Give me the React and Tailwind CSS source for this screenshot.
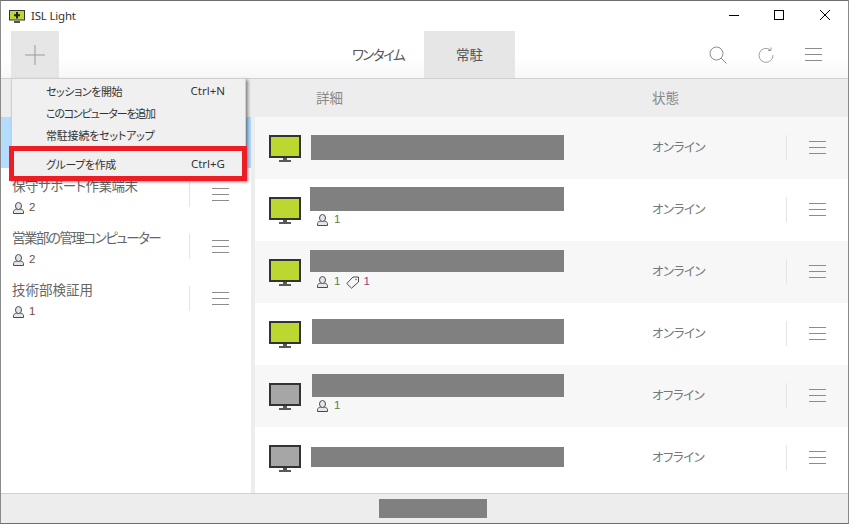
import React from "react";

const font = { fontFamily: '"Noto Sans CJK JP","Liberation Sans",sans-serif', fontFeatureSettings: '"palt"' };
const latin = { fontFamily: '"Noto Sans",sans-serif' };
const arial = { fontFamily: '"Liberation Sans",sans-serif' };

function Burger({ className = "" }) {
  return (
    <div className={"flex w-[17px] flex-col gap-[5px] " + className}>
      <div className="h-px bg-[#8c8c8c]" />
      <div className="h-px bg-[#8c8c8c]" />
      <div className="h-px bg-[#8c8c8c]" />
    </div>
  );
}

function Person() {
  return (
    <svg width="11" height="12" viewBox="0 0 11 12" className="shrink-0">
      <path d="M0.5 11.5 V9.5 C0.5 8 2.5 7.5 3.5 7 H7.5 C8.5 7.5 10.5 8 10.5 9.5 V11.5 Z" fill="#e6e6e6" stroke="#4a4a4a" />
      <ellipse cx="5.5" cy="4" rx="3" ry="3.5" fill="#e6e6e6" stroke="#4a4a4a" />
    </svg>
  );
}

function Tag() {
  return (
    <svg width="13" height="13" viewBox="0 0 13 13" className="shrink-0">
      <path d="M0.8 7.5 L7 1 H12.5 V6 L5.5 12.2 Z" fill="none" stroke="#4a4a4a" />
      <circle cx="10" cy="3.5" r="0.7" fill="#4a4a4a" />
    </svg>
  );
}

function Monitor({ on }) {
  return (
    <svg width="32" height="27" viewBox="0 0 32 27" className="shrink-0">
      <rect x="1" y="1" width="30" height="21" fill={on ? "#bbd730" : "#a6a6a6"} stroke="#333" strokeWidth="2" />
      <rect x="14" y="23" width="4" height="2" fill="#595959" />
      <rect x="10" y="25" width="12" height="2" fill="#595959" />
    </svg>
  );
}

const rows = [
  { on: true, bar: "mt-[18px] h-[25px] w-[253px]", stat: "オンライン", bg: "bg-[#f7f7f7]" },
  { on: true, bar: "mt-[8px] h-[24px] w-[254px]", stat: "オンライン", bg: "bg-white", p: "mt-[3px]" },
  { on: true, bar: "mt-[9px] h-[22px] w-[254px]", stat: "オンライン", bg: "bg-[#f7f7f7]", p: "mt-[4px]", t: 1 },
  { on: true, bar: "mt-[16px] h-[25px] w-[252px]", stat: "オンライン", bg: "bg-white" },
  { on: false, bar: "mt-[9px] h-[23px] w-[252px]", stat: "オフライン", bg: "bg-[#f7f7f7]", p: "mt-[3px]" },
  { on: false, bar: "mt-[20px] h-[20px] w-[253px]", stat: "オフライン", bg: "bg-white" },
];

function Row({ r }) {
  return (
    <div className={"flex h-[62px] items-center " + r.bg}>
      <div className="ml-[14px] w-[41px] shrink-0"><Monitor on={r.on} /></div>
      <div className="flex h-full w-[254px] shrink-0 flex-col">
        <div className={"self-end bg-[#808080] " + r.bar} />
        {r.p ? (
          <div className={"flex h-[12px] items-center pl-[7px] text-[11.5px] leading-none text-[#5f7a4a] " + r.p} style={arial}>
            <Person />
            <span className="ml-[6px]">1</span>
            {r.t ? (
              <>
                <span className="ml-[6px]"><Tag /></span>
                <span className="ml-[4px] text-[#7d4a85]">1</span>
              </>
            ) : null}
          </div>
        ) : null}
      </div>
      <div className="ml-[88px] w-[134px] shrink-0 pb-[2px] text-[12.5px] tracking-[-0.5px] text-[#777]">{r.stat}</div>
      <div className="mb-[1px] h-[25px] w-px shrink-0 bg-[#e4e4e4]" />
      <Burger className="mb-[1px] ml-[22px]" />
    </div>
  );
}

function Group({ name, n, track }) {
  return (
    <div className="flex h-[52px] shrink-0">
      <div className="w-[188px] shrink-0 pl-[11px]">
        <div className={"text-[13.5px] leading-[20px] text-[#666] " + track}>{name}</div>
        <div className="mt-[7px] flex items-center pl-[1px] text-[11.5px] leading-none text-[#7a4a40]" style={arial}>
          <Person />
          <span className="ml-[5px]">{n}</span>
        </div>
      </div>
      <div className="mt-[7px] h-[25px] w-px bg-[#e4e4e4]" />
      <Burger className="ml-[22px] mt-[13px]" />
    </div>
  );
}

function Item({ label, sc, track }) {
  return (
    <div className="flex h-[22px] items-center pl-[34px] pr-[20px] text-[11.5px] text-[#333]">
      <span className={"flex-1 text-[11px] " + track}>{label}</span>
      {sc ? <span style={latin}>{sc}</span> : null}
    </div>
  );
}

export default function App() {
  return (
    <div className="relative flex h-[524px] w-[849px] flex-col overflow-hidden border border-t-[#6e6e6e] border-x-[#8a8a8a] border-b-[#6e6e6e] bg-white" style={font}>
      <div className="flex h-[30px] shrink-0 items-center">
        <svg width="16" height="13" viewBox="0 0 16 13" className="ml-[8px]">
          <rect x="0.5" y="0.5" width="15" height="9.5" fill="#bbd730" stroke="#333" />
          <path d="M8 2 V8.5 M5 5.2 H11" stroke="#222" strokeWidth="2" />
          <rect x="5" y="11" width="6" height="2" fill="#555" />
        </svg>
        <span className="ml-[6px] text-[11.5px] tracking-[-0.2px] text-[#333]" style={latin}>ISL Light</span>
        <div className="flex-1" />
        <div className="flex h-[30px] items-center pb-[2px] pr-[18px]">
          <div className="h-px w-[10px] bg-black" />
          <div className="ml-[35px] h-[10px] w-[10px] border border-black" />
          <svg width="10" height="10" viewBox="0 0 10 10" className="ml-[36px]">
            <path d="M0 0 L10 10 M10 0 L0 10" stroke="#000" fill="none" />
          </svg>
        </div>
      </div>

      <div className="relative flex h-[48px] shrink-0 items-stretch border-b border-[#cfcfcf] bg-gradient-to-b from-white from-60% to-[#f7f7f7]">
        <div className="ml-[10px] flex w-[48px] items-center justify-center bg-[#e6e6e6]">
          <svg width="20" height="20" viewBox="0 0 20 20"><path d="M10 0 V20 M0 10 H20" stroke="#999" fill="none" /></svg>
        </div>
        <div className="ml-[273px] flex w-[92px] items-center justify-center text-[13.5px] tracking-[-1.6px] text-[#555]">ワンタイム</div>
        <div className="flex w-[91px] items-center justify-center bg-[#e6e6e6] text-[13.5px] text-[#555]">常駐</div>
        <div className="ml-[194px] flex items-center">
          <svg width="18" height="18" viewBox="0 0 18 18" fill="none" stroke="#8c8c8c">
            <circle cx="7.5" cy="7.5" r="6.5" /><path d="M12 12 L17.5 17.5" />
          </svg>
          <svg width="16" height="16" viewBox="0 0 16 16" fill="none" stroke="#a0a0a0" className="ml-[31px]">
            <path d="M12.5 3 A7 7 0 1 0 15 8" /><path d="M10 3.5 H13 V0.5" />
          </svg>
          <Burger className="ml-[31px]" />
        </div>
      </div>

      <div className="flex min-h-0 flex-1">
        <div className="flex w-[250px] shrink-0 flex-col">
          <div className="h-[38px] shrink-0 bg-[#ededed]" />
          <div className="h-[51px] shrink-0 bg-[#b3dcff]" />
          <div className="h-[7px] shrink-0" />
          <Group name="保守サポート作業端末" n="2" track="tracking-[-0.5px]" />
          <Group name="営業部の管理コンピューター" n="2" track="tracking-[-1.5px]" />
          <Group name="技術部検証用" n="1" track="" />
        </div>
        <div className="w-[4px] shrink-0 bg-[#ededed]" />
        <div className="min-w-0 flex-1">
          <div className="flex h-[38px] items-center bg-[#ededed] pb-[2px] text-[13.5px] text-[#888]">
            <span className="ml-[61px] w-[336px]">詳細</span>
            <span>状態</span>
          </div>
          {rows.map((r, i) => <Row key={i} r={r} />)}
        </div>
      </div>

      <div className="flex h-[30px] shrink-0 items-center justify-center border-t border-[#cfcfcf] bg-[#ededed] pl-[16px]">
        <div className="h-[19px] w-[108px] bg-[#808080]" />
      </div>

      <div className="absolute left-[10px] top-[77px] w-[235px] border border-[#cfcfcf] bg-[#f0f0f0] pt-[1px] shadow-[2px_2px_3px_rgba(0,0,0,0.45)]">
        <Item label="セッションを開始" sc="Ctrl+N" track="tracking-[-0.4px]" />
        <Item label="このコンピューターを追加" track="tracking-[-1.2px]" />
        <Item label="常駐接続をセットアップ" track="tracking-[-0.2px]" />
        <div className="h-[7px]" />
        <Item label="グループを作成" sc="Ctrl+G" track="tracking-[-0.4px]" />
        <div className="h-[4px]" />
      </div>
      <div className="absolute left-[8px] top-[145px] h-[35px] w-[238px] border-[5px] border-[#ee1c25]" />
    </div>
  );
}
